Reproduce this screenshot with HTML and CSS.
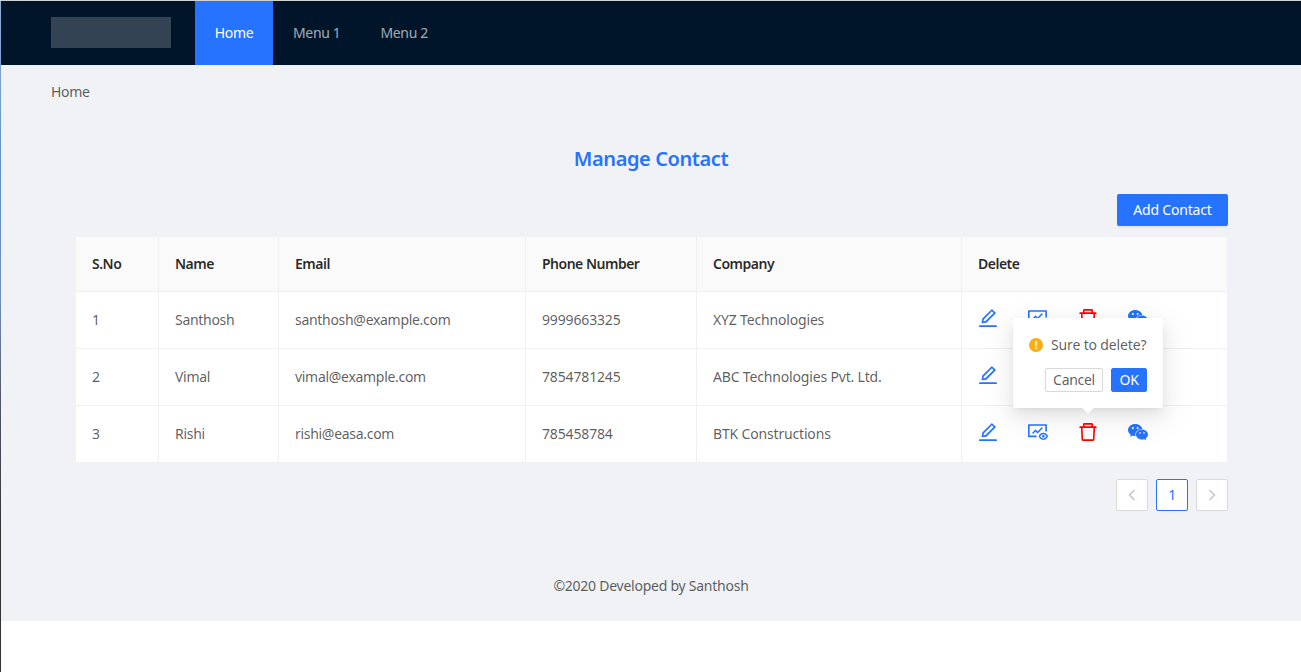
FILE: index.html
```html
<!DOCTYPE html>
<html lang="en">
<head>
<meta charset="utf-8">
<title>Manage Contact</title>
<link rel="stylesheet" href="styles.css">
</head>
<body>
<svg class="defs" width="0" height="0" aria-hidden="true">
  <symbol id="i-edit" viewBox="64 64 896 896"><path d="M257.7 752c2 0 4-.2 6-.5L431.9 722c2-.4 3.9-1.3 5.3-2.8l423.9-423.9a9.96 9.96 0 0 0 0-14.1L694.9 114.9c-1.9-1.9-4.4-2.9-7.1-2.9s-5.2 1-7.1 2.9L256.8 538.8c-1.5 1.5-2.4 3.3-2.8 5.3l-29.5 168.2a33.5 33.5 0 0 0 9.4 29.8c6.6 6.4 14.9 9.9 23.8 9.9zm67.4-174.4L687.8 215l73.3 73.3-362.7 362.6-88.9 15.7 15.6-89zM880 836H144c-17.7 0-32 14.3-32 32v36c0 4.4 3.6 8 8 8h784c4.4 0 8-3.6 8-8v-36c0-17.7-14.3-32-32-32z"/></symbol>
  <symbol id="i-fund" viewBox="64 64 896 896"><path d="M136 232h704v253h72V192c0-17.7-14.3-32-32-32H96c-17.7 0-32 14.3-32 32v520c0 17.7 14.3 32 32 32h352v-72H136V232z"/><path d="M724.9 338.1l-36.8-36.8a8.03 8.03 0 0 0-11.3 0L493 485.3l-86.1-86.2a8.03 8.03 0 0 0-11.3 0L251.3 543.4a8.03 8.03 0 0 0 0 11.3l36.8 36.8c3.1 3.1 8.2 3.1 11.3 0l101.8-101.8 86.1 86.2c3.1 3.1 8.2 3.1 11.3 0l226.3-226.5c3.2-3.1 3.2-8.2 0-11.3z"/><path d="M956 686.5l-.1-.1-.1-.1C911.7 593 843.4 545 752.5 545s-159.2 48.1-203.4 141.3v.1a42.92 42.92 0 0 0 0 36.4C593.3 816 661.6 864 752.5 864s159.2-48.1 203.4-141.3c5.5-11.5 5.5-24.8.1-36.2zM752.5 800c-62.1 0-107.4-30-141.1-95.5C645 639 690.4 609 752.5 609c62.1 0 107.4 30 141.1 95.5C860 770 814.6 800 752.5 800z"/><path d="M697 705a56 56 0 1 0 112 0 56 56 0 1 0-112 0z"/></symbol>
  <symbol id="i-del" viewBox="64 64 896 896"><path d="M360 184h-8c4.4 0 8-3.6 8-8v8h304v-8c0 4.4 3.6 8 8 8h-8v72h72v-80c0-35.3-28.7-64-64-64H352c-35.3 0-64 28.7-64 64v80h72v-72zm504 72H160c-17.7 0-32 14.3-32 32v32c0 4.4 3.6 8 8 8h60.4l24.7 523c1.6 34.1 29.8 61 63.9 61h454c34.2 0 62.3-26.8 63.9-61l24.7-523H888c4.4 0 8-3.6 8-8v-32c0-17.7-14.3-32-32-32zM731.3 840H292.7l-24.2-512h487l-24.2 512z"/></symbol>
  <symbol id="i-chat" viewBox="64 64 896 896"><path d="M690.1 377.4c5.9 0 11.8.2 17.6.5-24.4-128.7-158.3-227.1-319.9-227.1C209 150.8 64 271.4 64 420.2c0 81.1 43.6 154.2 111.9 203.6a21.5 21.5 0 0 1 9.1 17.6c0 2.4-.5 4.6-1.1 6.9-5.5 20.3-14.2 52.8-14.6 54.3-.7 2.6-1.7 5.2-1.7 7.9 0 5.9 4.8 10.8 10.8 10.8 2.3 0 4.2-.9 6.2-2l70.9-40.9c5.3-3.1 11-5 17.2-5 3.2 0 6.4.5 9.5 1.4 33.1 9.5 68.8 14.8 105.7 14.8 6 0 11.9-.1 17.8-.4-7.1-21-10.9-43.1-10.9-66 0-135.8 132.2-245.8 295.3-245.8zm-194.3-86.5c23.8 0 43.2 19.3 43.2 43.1s-19.3 43.1-43.2 43.1c-23.8 0-43.2-19.3-43.2-43.1s19.4-43.1 43.2-43.1zm-215.9 86.2c-23.8 0-43.2-19.3-43.2-43.1s19.3-43.1 43.2-43.1 43.2 19.3 43.2 43.1-19.4 43.1-43.2 43.1zm586.8 415.6c56.9-41.2 93.2-102 93.2-169.7 0-124-120.8-224.5-269.9-224.5-149 0-269.9 100.5-269.9 224.5S540.9 847.5 690 847.5c30.8 0 60.6-4.4 88.1-12.3 2.6-.8 5.2-1.2 7.9-1.2 5.2 0 9.9 1.6 14.3 4.1l59.1 34c1.7 1 3.3 1.7 5.2 1.7a9 9 0 0 0 6.4-2.6 9 9 0 0 0 2.6-6.4c0-2.2-.9-4.4-1.4-6.6-.3-1.2-7.6-28.3-12.2-45.3-.5-1.9-.9-3.8-.9-5.7.1-5.9 3.1-11.2 7.6-14.5zM600.2 587.2c-19.9 0-36-16.1-36-35.9 0-19.8 16.1-35.9 36-35.9s36 16.1 36 35.9c0 19.8-16.2 35.9-36 35.9zm179.9 0c-19.9 0-36-16.1-36-35.9 0-19.8 16.1-35.9 36-35.9s36 16.1 36 35.9a36.08 36.08 0 0 1-36 35.9z"/></symbol>
</svg>
<div class="page">
  <header class="header">
    <div class="logo"></div>
    <nav class="menu">
      <a class="menu-item active">Home</a>
      <a class="menu-item">Menu 1</a>
      <a class="menu-item">Menu 2</a>
    </nav>
  </header>
  <main class="main">
    <div class="crumb">Home</div>
    <h1 class="title">Manage Contact</h1>
    <div class="toolbar"><button class="btn-add">Add Contact</button></div>
    <table class="table">
      <colgroup>
        <col class="c1"><col class="c2"><col class="c3"><col class="c4"><col class="c5"><col class="c6">
      </colgroup>
      <thead>
        <tr><th>S.No</th><th>Name</th><th>Email</th><th>Phone Number</th><th>Company</th><th>Delete</th></tr>
      </thead>
      <tbody>
        <tr>
          <td>1</td><td>Santhosh</td><td>santhosh@example.com</td><td class="phone">9999663325</td><td class="company">XYZ Technologies</td>
          <td><div class="actions">
            <svg class="ic blue"><use href="#i-edit"/></svg>
            <svg class="ic blue"><use href="#i-fund"/></svg>
            <svg class="ic red"><use href="#i-del"/></svg>
            <svg class="ic blue"><use href="#i-chat"/></svg>
          </div></td>
        </tr>
        <tr>
          <td>2</td><td>Vimal</td><td>vimal@example.com</td><td class="phone">7854781245</td><td class="company">ABC Technologies Pvt. Ltd.</td>
          <td><div class="actions">
            <svg class="ic blue"><use href="#i-edit"/></svg>
            <svg class="ic blue"><use href="#i-fund"/></svg>
            <svg class="ic red"><use href="#i-del"/></svg>
            <svg class="ic blue"><use href="#i-chat"/></svg>
          </div></td>
        </tr>
        <tr>
          <td>3</td><td>Rishi</td><td>rishi@easa.com</td><td class="phone">785458784</td><td class="company">BTK Constructions</td>
          <td><div class="actions">
            <svg class="ic blue"><use href="#i-edit"/></svg>
            <svg class="ic blue"><use href="#i-fund"/></svg>
            <span class="anchor">
              <svg class="ic red"><use href="#i-del"/></svg>
              <div class="popover">
                <div class="pop-msg"><span class="warn">!</span><span>Sure to delete?</span></div>
                <div class="pop-btns"><button class="btn-cancel">Cancel</button><button class="btn-ok">OK</button></div>
                <span class="arrow"></span>
              </div>
            </span>
            <svg class="ic blue"><use href="#i-chat"/></svg>
          </div></td>
        </tr>
      </tbody>
    </table>
    <div class="pager">
      <span class="page-btn"><svg class="chev" viewBox="0 0 10 12"><path d="M7.5 1 2.5 6l5 5"/></svg></span>
      <span class="page-btn current">1</span>
      <span class="page-btn"><svg class="chev" viewBox="0 0 10 12"><path d="M2.5 1l5 5-5 5"/></svg></span>
    </div>
    <footer class="footer">©2020 Developed by Santhosh</footer>
  </main>
</div>
</body>
</html>
```
FILE: styles.css
```css
* { box-sizing: border-box; }
html, body { margin: 0; padding: 0; background: #fff; }
body {
  font-family: "Noto Sans", "Open Sans", sans-serif;
  font-size: 14px;
  line-height: 22px;
  letter-spacing: -0.3px;
  color: rgba(0, 0, 0, 0.65);
  height: 672px;
  overflow: hidden;
}
.defs { display: block; height: 0; }
.page {
  height: 672px;
  padding: 1px 0 0 1px;
  background:
    linear-gradient(#cfd3d8, #cfd3d8) 0 0 / 100% 1px no-repeat,
    linear-gradient(180deg, #8fb0dc 0, #5f8fd0 25%, #6f8db8 45%, #4f5666 60%, #333 80%, #333 100%) 0 0 / 1px 100% no-repeat,
    #fff;
}
.header {
  height: 64px;
  background: #001529;
  display: flex;
  padding-left: 50px;
}
.logo { width: 120px; height: 31px; margin: 16px 24px 0 0; background: rgba(255, 255, 255, 0.2); }
.menu { display: flex; letter-spacing: -0.35px; }
.menu-item { padding: 0 20px; line-height: 64px; color: rgba(255, 255, 255, 0.65); }
.menu-item.active { background: #2673ff; color: #fff; width: 78px; padding: 0; text-align: center; }
.main { background: #f0f2f5; height: 556px; padding: 16px 50px 0; display: flex; flex-direction: column; }
.crumb { line-height: 22px; }
.title { margin: 41px 0 0; text-align: center; color: #2673ff; font-size: 20px; line-height: 30px; font-weight: 600; letter-spacing: -0.4px; }
.toolbar { display: flex; justify-content: flex-end; margin: 20px 23px 0 0; }
.btn-add {
  font: inherit; letter-spacing: -0.2px; height: 32px; width: 111px; padding: 0; border: 0; border-radius: 2px;
  background: #2673ff; color: #fff; box-shadow: 0 2px 0 rgba(0, 0, 0, 0.045);
}
.table { width: 1151px; margin: 11px 0 0 25px; border-collapse: separate; border-spacing: 0; background: #fff; table-layout: fixed; }
.c1 { width: 83px; } .c2 { width: 120px; } .c3 { width: 247px; } .c4 { width: 171px; } .c5 { width: 265px; } .c6 { width: 265px; }
.table th, .table td { padding: 0 16px; text-align: left; border-bottom: 1px solid #f0f0f0; border-right: 1px solid #f0f0f0; }
.table th:last-child, .table td:last-child { border-right: 0; }
.table th { height: 55px; background: #fafafa; color: rgba(0, 0, 0, 0.85); font-weight: 600; letter-spacing: -0.5px; }
.table td { height: 57px; }
.table .phone { letter-spacing: -0.15px; }
.table .company { letter-spacing: -0.17px; }
.actions { display: flex; align-items: center; gap: 30px; margin-top: -4px; }
.ic { width: 20px; height: 20px; display: block; fill: currentColor; }
.blue { color: #2673ff; }
.red { color: #ff0000; }
.anchor { position: relative; display: block; }
.popover {
  position: absolute; left: -65px; bottom: 34px; width: 150px; height: 90px;
  background: #fff; border-radius: 2px; padding: 16px;
  letter-spacing: -0.15px;
  box-shadow: 0 3px 6px -4px rgba(0,0,0,.12), 0 6px 16px 0 rgba(0,0,0,.08), 0 9px 28px 8px rgba(0,0,0,.05);
  z-index: 2;
}
.arrow { position: absolute; left: 71px; bottom: -4px; width: 8px; height: 8px; background: #fff; transform: rotate(45deg); }
.pop-msg { display: flex; align-items: center; gap: 8px; white-space: nowrap; height: 22px; }
.warn {
  width: 14px; height: 14px; border-radius: 50%; background: #faad14; color: #fff;
  font-size: 10px; line-height: 14px; text-align: center; font-weight: 700; flex: none;
}
.pop-btns { display: flex; justify-content: flex-end; gap: 8px; margin-top: 12px; }
.btn-cancel, .btn-ok { font: inherit; letter-spacing: -0.3px; height: 24px; padding: 0; border-radius: 2px; }
.btn-cancel { width: 58px; background: #fff; border: 1px solid #d9d9d9; color: rgba(0,0,0,.65); }
.btn-ok { width: 36px; background: #2673ff; border: 1px solid #2673ff; color: #fff; }
.pager { display: flex; justify-content: flex-end; gap: 8px; margin: 16px 23px 0 0; }
.page-btn {
  width: 32px; height: 32px; border: 1px solid #d9d9d9; border-radius: 2px; background: #fff;
  display: flex; align-items: center; justify-content: center;
}
.page-btn.current { border-color: #2673ff; color: #2673ff; }
.chev { width: 10px; height: 12px; fill: none; stroke: #bfbfbf; stroke-width: 1.2; }
.footer { margin: 64px 0 0; text-align: center; line-height: 22px; letter-spacing: -0.25px; }
```
